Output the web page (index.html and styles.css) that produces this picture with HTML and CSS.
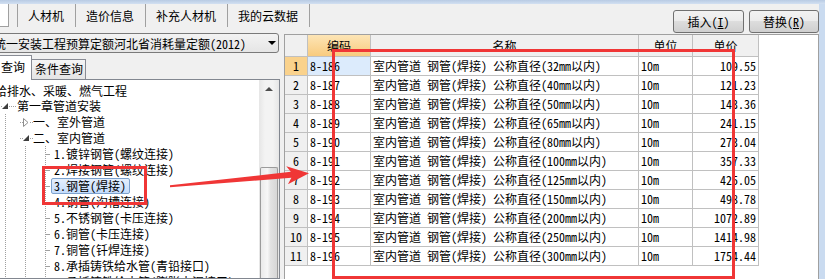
FILE: index.html
```html
<!DOCTYPE html>
<html lang="zh-CN">

<head>
    <meta charset="UTF-8">
    <meta name="viewport" content="width=device-width, initial-scale=1.0">
    <title>定额查询</title>
    <link rel="stylesheet" href="styles.css">
</head>

<body>

    <div class="window">
        <div class="title-strip"></div>

        <div class="shell">
            <div class="main">

                <div class="topbar">
                    <div class="toolbar">
                        <div class="stub-box"></div>
                        <div class="tool-tab">人材机</div>
                        <div class="tool-tab">造价信息</div>
                        <div class="tool-tab">补充人材机</div>
                        <div class="tool-tab">我的云数据</div>
                    </div>
                    <div class="actions">
                        <button class="btn">插入(<u>I</u>)</button>
                        <button class="btn btn-narrow">替换(<u>R</u>)</button>
                    </div>
                </div>

                <div class="content">
                    <!-- left: quota book + chapter tree -->
                    <div class="left">
                        <div class="combo">
                            <span class="combo-text">统一安装工程预算定额河北省消耗量定额(2012)</span>
                            <span class="combo-arrow"></span>
                        </div>

                        <div class="tabs">
                            <div class="tab active">查询</div>
                            <div class="tab">条件查询</div>
                        </div>

                        <div class="tree-box">
                            <div class="tree">
                                <div class="node root">给排水、采暖、燃气工程</div>
                                <div class="node">
                                    <span class="twist lvl1">
                                        <svg width="7" height="7" viewBox="0 0 7 7"><polygon points="6,0 6,6 0,6" fill="#3d3d3d"/></svg>
                                    </span>
                                    <span class="label">第一章管道安装</span>
                                </div>
                                <div class="node">
                                    <span class="guide"></span>
                                    <span class="twist lvl2">
                                        <svg width="6" height="9" viewBox="0 0 6 9"><polygon points="0.5,0.5 5,4.5 0.5,8.5" fill="#fff" stroke="#8e8e8e"/></svg>
                                    </span>
                                    <span class="label">一、室外管道</span>
                                </div>
                                <div class="node">
                                    <span class="guide"></span>
                                    <span class="twist lvl2">
                                        <svg width="7" height="7" viewBox="0 0 7 7"><polygon points="6,0 6,6 0,6" fill="#3d3d3d"/></svg>
                                    </span>
                                    <span class="label">二、室内管道</span>
                                </div>
                                <div class="node"><span class="guide"></span><span class="guide"></span><span class="leaf-line"></span><span class="label">1.镀锌钢管(螺纹连接)</span></div>
                                <div class="node"><span class="guide"></span><span class="guide"></span><span class="leaf-line"></span><span class="label">2.焊接钢管(螺纹连接)</span></div>
                                <div class="node"><span class="guide"></span><span class="guide"></span><span class="leaf-line"></span><span class="label selected">3.钢管(焊接)</span></div>
                                <div class="node"><span class="guide"></span><span class="guide"></span><span class="leaf-line"></span><span class="label">4.钢管(沟槽连接)</span></div>
                                <div class="node"><span class="guide"></span><span class="guide"></span><span class="leaf-line"></span><span class="label">5.不锈钢管(卡压连接)</span></div>
                                <div class="node"><span class="guide"></span><span class="guide"></span><span class="leaf-line"></span><span class="label">6.铜管(卡压连接)</span></div>
                                <div class="node"><span class="guide"></span><span class="guide"></span><span class="leaf-line"></span><span class="label">7.铜管(钎焊连接)</span></div>
                                <div class="node"><span class="guide"></span><span class="guide"></span><span class="leaf-line"></span><span class="label">8.承插铸铁给水管(青铅接口)</span></div>
                                <div class="node"><span class="guide"></span><span class="guide"></span><span class="leaf-line"></span><span class="label">9.承插铸铁给水管(膨胀水泥接口)</span></div>
                            </div>
                            <div class="scrollbar">
                                <div class="scroll-up"><span class="up-arrow"></span></div>
                                <div class="scroll-track"></div>
                                <div class="scroll-thumb"></div>
                            </div>
                        </div>
                    </div>

                    <!-- right: quota item grid -->
                    <div class="grid-box">
                        <div class="grid">
                            <div class="cell hd"></div>
                            <div class="cell hd sel">编码</div>
                            <div class="cell hd">名称</div>
                            <div class="cell hd">单位</div>
                            <div class="cell hd">单价</div>

                            <div class="cell num sel">1</div>
                            <div class="cell cur">8-186</div>
                            <div class="cell">室内管道 钢管(焊接) 公称直径(32mm以内)</div>
                            <div class="cell">10m</div>
                            <div class="cell price">109.55</div>

                            <div class="cell num">2</div>
                            <div class="cell">8-187</div>
                            <div class="cell">室内管道 钢管(焊接) 公称直径(40mm以内)</div>
                            <div class="cell">10m</div>
                            <div class="cell price">121.23</div>

                            <div class="cell num">3</div>
                            <div class="cell">8-188</div>
                            <div class="cell">室内管道 钢管(焊接) 公称直径(50mm以内)</div>
                            <div class="cell">10m</div>
                            <div class="cell price">143.36</div>

                            <div class="cell num">4</div>
                            <div class="cell">8-189</div>
                            <div class="cell">室内管道 钢管(焊接) 公称直径(65mm以内)</div>
                            <div class="cell">10m</div>
                            <div class="cell price">241.15</div>

                            <div class="cell num">5</div>
                            <div class="cell">8-190</div>
                            <div class="cell">室内管道 钢管(焊接) 公称直径(80mm以内)</div>
                            <div class="cell">10m</div>
                            <div class="cell price">273.04</div>

                            <div class="cell num">6</div>
                            <div class="cell">8-191</div>
                            <div class="cell">室内管道 钢管(焊接) 公称直径(100mm以内)</div>
                            <div class="cell">10m</div>
                            <div class="cell price">357.33</div>

                            <div class="cell num">7</div>
                            <div class="cell">8-192</div>
                            <div class="cell">室内管道 钢管(焊接) 公称直径(125mm以内)</div>
                            <div class="cell">10m</div>
                            <div class="cell price">425.05</div>

                            <div class="cell num">8</div>
                            <div class="cell">8-193</div>
                            <div class="cell">室内管道 钢管(焊接) 公称直径(150mm以内)</div>
                            <div class="cell">10m</div>
                            <div class="cell price">498.78</div>

                            <div class="cell num">9</div>
                            <div class="cell">8-194</div>
                            <div class="cell">室内管道 钢管(焊接) 公称直径(200mm以内)</div>
                            <div class="cell">10m</div>
                            <div class="cell price">1072.89</div>

                            <div class="cell num">10</div>
                            <div class="cell">8-195</div>
                            <div class="cell">室内管道 钢管(焊接) 公称直径(250mm以内)</div>
                            <div class="cell">10m</div>
                            <div class="cell price">1414.98</div>

                            <div class="cell num">11</div>
                            <div class="cell">8-196</div>
                            <div class="cell">室内管道 钢管(焊接) 公称直径(300mm以内)</div>
                            <div class="cell">10m</div>
                            <div class="cell price">1754.44</div>
                        </div>
                    </div>
                </div>

            </div>
            <div class="frame"></div>
        </div>

        <!-- red screenshot annotations drawn on top -->
        <svg class="marks" width="825" height="279" viewBox="0 0 825 279">
            <rect x="333.5" y="50.5" width="400" height="227" fill="none" stroke="#f03636" stroke-width="3"/>
            <rect x="43.5" y="167.5" width="102" height="36" fill="none" stroke="#f03636" stroke-width="3"/>
            <polygon points="170,185.3 290.8,171.8 286.3,166.2 309,173.2 287.9,184.2 291.4,177.8 170,187.3" fill="#f03636"/>
        </svg>
    </div>

</body>

</html>
```

FILE: styles.css
```css
* {
    box-sizing: border-box;
}

body {
    margin: 0;
    width: 825px;
    height: 279px;
    overflow: hidden;
    font-family: "Noto Sans Mono CJK SC", "Noto Sans CJK SC", sans-serif;
    font-size: 12px;
    color: #000;
    background-color: #f0f0f0;
}

.window {
    position: relative;
    width: 825px;
    height: 279px;
    display: flex;
    flex-direction: column;
}

.title-strip {
    flex: none;
    height: 4px;
    background: linear-gradient(#b8cbe4, #d2e0f2);
}

.shell {
    flex: 1;
    display: flex;
    min-height: 0;
}

.main {
    flex: 1;
    display: flex;
    flex-direction: column;
    min-width: 0;
}

.frame {
    width: 6px;
    background-color: #cadbf0;
}

/* top row: tool tabs and buttons */
.topbar {
    flex: none;
    height: 29px;
    display: flex;
    justify-content: space-between;
}

.toolbar {
    height: 23px;
    display: flex;
}

.stub-box {
    width: 9px;
    margin-right: 8px;
    background-color: #fff;
    border-right: 1px solid #a0a0a0;
    border-bottom: 1px solid #a0a0a0;
}

.tool-tab {
    padding: 0 11px 0 10px;
    line-height: 23px;
    border-left: 1px solid #a0a0a0;
    white-space: nowrap;
}

.tool-tab:last-child {
    border-right: 1px solid #a0a0a0;
}

.actions {
    display: flex;
    gap: 5px;
    margin-top: 6px;
}

.btn {
    width: 71px;
    height: 23px;
    padding: 0;
    font: inherit;
    color: #000;
    border: 1px solid #707070;
    border-radius: 3px;
    background: linear-gradient(#f2f2f2 0%, #ebebeb 50%, #dddddd 50%, #cfcfcf 100%);
}

.btn-narrow {
    width: 70px;
}

/* lower area */
.content {
    flex: 1;
    display: flex;
    gap: 4px;
    min-height: 0;
}

.left {
    width: 280px;
    flex: none;
    display: flex;
    flex-direction: column;
}

.combo {
    height: 20px;
    width: 289px;
    margin-left: -10px;
    padding-left: 3px;
    display: flex;
    align-items: center;
    justify-content: space-between;
    border: 1px solid #7a7a7a;
    border-radius: 3px;
    background: linear-gradient(#f3f3f3, #e5e5e5);
    white-space: nowrap;
}

.combo-arrow {
    width: 0;
    height: 0;
    margin-right: 2px;
    border-left: 4px solid transparent;
    border-right: 4px solid transparent;
    border-top: 4px solid #000;
}

.tabs {
    flex: none;
    height: 24px;
    margin-top: 2px;
    display: flex;
    align-items: flex-end;
}

.tab {
    height: 20px;
    padding: 0 2px 0 3px;
    line-height: 18px;
    border: 1px solid #898c95;
    border-left: none;
    border-bottom: none;
    background: linear-gradient(#f5f5f5, #e4e4e4);
}

.tab.active {
    position: relative;
    z-index: 1;
    width: 33px;
    height: 25px;
    margin-left: -1px;
    margin-bottom: -1px;
    padding-left: 1px;
    line-height: 22px;
    border-left: 1px solid #898c95;
    background: #fff;
}

.tree-box {
    flex: 1;
    display: flex;
    min-height: 0;
    background-color: #fff;
    border: 1px solid #828790;
    border-left: none;
}

.tree {
    flex: 1;
    padding-top: 2px;
    overflow: hidden;
}

.node {
    height: 16px;
    display: flex;
    align-items: center;
    white-space: nowrap;
}

.node.root {
    margin-left: -5px;
}

.guide {
    width: 20px;
    height: 16px;
    flex: none;
    background-image: linear-gradient(#a0a0a0 50%, transparent 50%);
    background-size: 1px 2px;
    background-position: 5px 0;
    background-repeat: repeat-y;
}

.twist {
    height: 16px;
    flex: none;
    display: flex;
    align-items: center;
    background-image: linear-gradient(to right, #a0a0a0 50%, transparent 50%);
    background-size: 2px 1px;
    background-repeat: repeat-x;
}

.twist svg {
    background-color: #fff;
}

.twist.lvl1 {
    width: 17px;
    padding-left: 2px;
    background-position: 9px 8px;
}

.twist.lvl2 {
    width: 13px;
    padding-left: 3px;
    background-position: 10px 8px;
}

.leaf-line {
    width: 14px;
    height: 16px;
    flex: none;
    background-image:
        linear-gradient(#a0a0a0 50%, transparent 50%),
        linear-gradient(to right, #a0a0a0 50%, transparent 50%);
    background-size: 1px 2px, 8px 1px;
    background-position: 5px 0, 6px 8px;
    background-repeat: repeat-y, no-repeat;
}

.label {
    line-height: 16px;
}

.label.selected {
    height: 16px;
    margin-left: -3px;
    padding: 0 3px 0 2px;
    line-height: 14px;
    border: 1px solid #7da2ce;
    border-radius: 2px;
    background: linear-gradient(#e4effd, #c4dcfc);
}

.scrollbar {
    width: 20px;
    flex: none;
    display: flex;
    flex-direction: column;
    background: linear-gradient(to right, #e6e6e6, #f3f3f3 30%, #f3f3f3 70%, #e6e6e6);
}

.scroll-up {
    height: 17px;
    display: flex;
    align-items: center;
    justify-content: center;
}

.up-arrow {
    width: 0;
    height: 0;
    border-left: 4px solid transparent;
    border-right: 4px solid transparent;
    border-bottom: 4px solid #4d4d4d;
}

.scroll-track {
    height: 70px;
}

.scroll-thumb {
    flex: 1;
    margin: 0 1px;
    border: 1px solid #9b9b9b;
    border-bottom: none;
    border-radius: 2px 2px 0 0;
    background: linear-gradient(to right, #eaeaea, #f7f7f7 40%, #e2e2e2 60%, #d6d6d6);
}

/* item grid */
.grid-box {
    flex: 1;
    margin-top: 1px;
    background-color: #fff;
    border: 1px solid #a0a0a0;
    border-bottom: none;
    overflow: hidden;
}

.grid {
    width: 474px;
    display: grid;
    grid-template-columns: 23px 63px 268px 54px 66px;
    grid-template-rows: 22px;
    grid-auto-rows: 19px;
}

.cell {
    padding: 0 2px;
    line-height: 18px;
    white-space: nowrap;
    overflow: hidden;
    border-right: 1px solid #c0c0c0;
    border-bottom: 1px solid #c0c0c0;
}

.cell.hd {
    line-height: 21px;
    text-align: center;
    background-color: #f0f0f0;
}

.cell.hd.sel {
    background: linear-gradient(#fde5b6, #f8cb7e);
}

.cell.num {
    text-align: center;
    background-color: #f0f0f0;
}

.cell.num.sel {
    background-color: #fad28c;
}

.cell.cur {
    background-color: #dcebfc;
}

.cell.price {
    text-align: right;
}

.marks {
    position: absolute;
    top: 0;
    left: 0;
    pointer-events: none;
}
```
